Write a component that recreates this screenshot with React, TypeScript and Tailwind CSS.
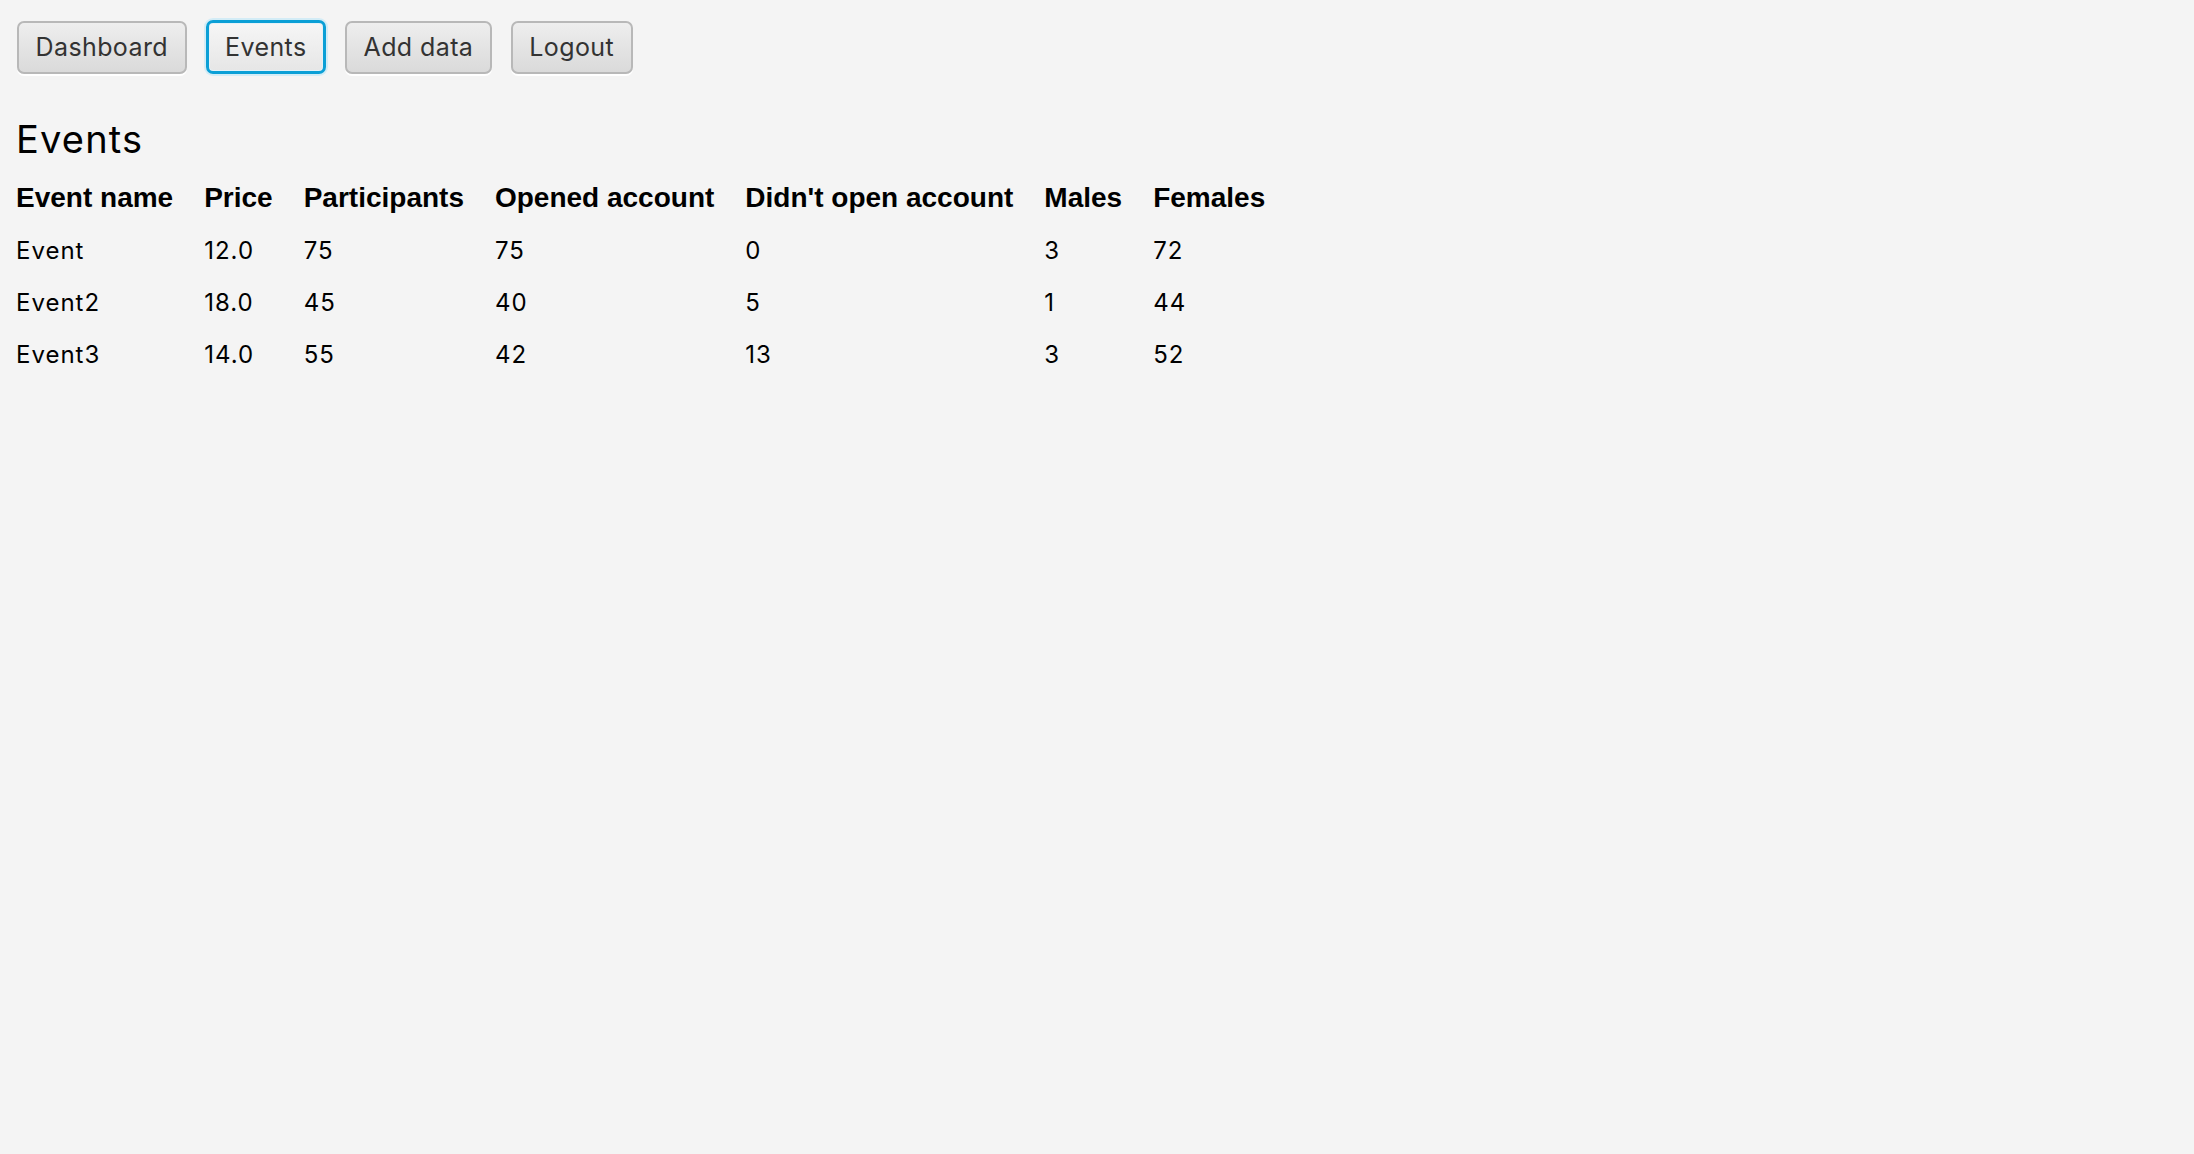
import { useState } from 'react';

type EventRow = {
  name: string;
  price: string;
  participants: number;
  opened: number;
  notOpened: number;
  males: number;
  females: number;
};

const NAV = ['Dashboard', 'Events', 'Add data', 'Logout'];

const HEADERS = [
  'Event name',
  'Price',
  'Participants',
  'Opened account',
  "Didn't open account",
  'Males',
  'Females',
];

const ROWS: EventRow[] = [
  { name: 'Event', price: '12.0', participants: 75, opened: 75, notOpened: 0, males: 3, females: 72 },
  { name: 'Event2', price: '18.0', participants: 45, opened: 40, notOpened: 5, males: 1, females: 44 },
  { name: 'Event3', price: '14.0', participants: 55, opened: 42, notOpened: 13, males: 3, females: 52 },
];

function App() {
  const [active, setActive] = useState('Events');

  return (
    <div className="min-h-screen bg-[#f4f4f4] pl-[16px] pt-[20px] font-['Inter',sans-serif] text-black">
      {/* Nav buttons */}
      <div className="flex items-center gap-[19px] pl-[1px]">
        {NAV.map((label) => {
          const focused = label === active;
          return (
            <button
              key={label}
              onClick={() => setActive(label)}
              className={
                focused
                  ? 'h-[54px] rounded-[7px] border-[3px] border-[#0a9fd6] bg-gradient-to-b from-[#f6f6f6] to-[#e6e6e6] px-[16.5px] text-[25px] leading-none tracking-[0.4px] text-[#333] shadow-[0_0_0_2px_#d3ecf6,inset_0_0_0_1px_#e4f1f7]'
                  : 'h-[53px] rounded-[7px] border-2 border-[#b8b8b8] bg-gradient-to-b from-[#eeeeee] to-[#dadada] px-[16.5px] text-[25px] leading-none tracking-[0.4px] text-[#333] shadow-[0_2px_0_#ffffff]'
              }
            >
              {label}
            </button>
          );
        })}
      </div>

      <h1 className="mt-[43px] text-[38px] leading-[44px] tracking-[1.2px] font-normal">Events</h1>

      {/* Events table */}
      <div className="mt-[10px] grid grid-cols-[repeat(7,max-content)] gap-x-[31px]">
        {HEADERS.map((h) => (
          <div key={h} className="font-['Liberation_Sans',Arial,sans-serif] text-[28px] font-bold leading-[54px]">
            {h}
          </div>
        ))}
        {ROWS.map((r) =>
          [r.name, r.price, r.participants, r.opened, r.notOpened, r.males, r.females].map((v, i) => (
            <div key={r.name + i} className="text-[24px] leading-[52px] tracking-[1px]">
              {v}
            </div>
          ))
        )}
      </div>
    </div>
  );
}

export default App;
